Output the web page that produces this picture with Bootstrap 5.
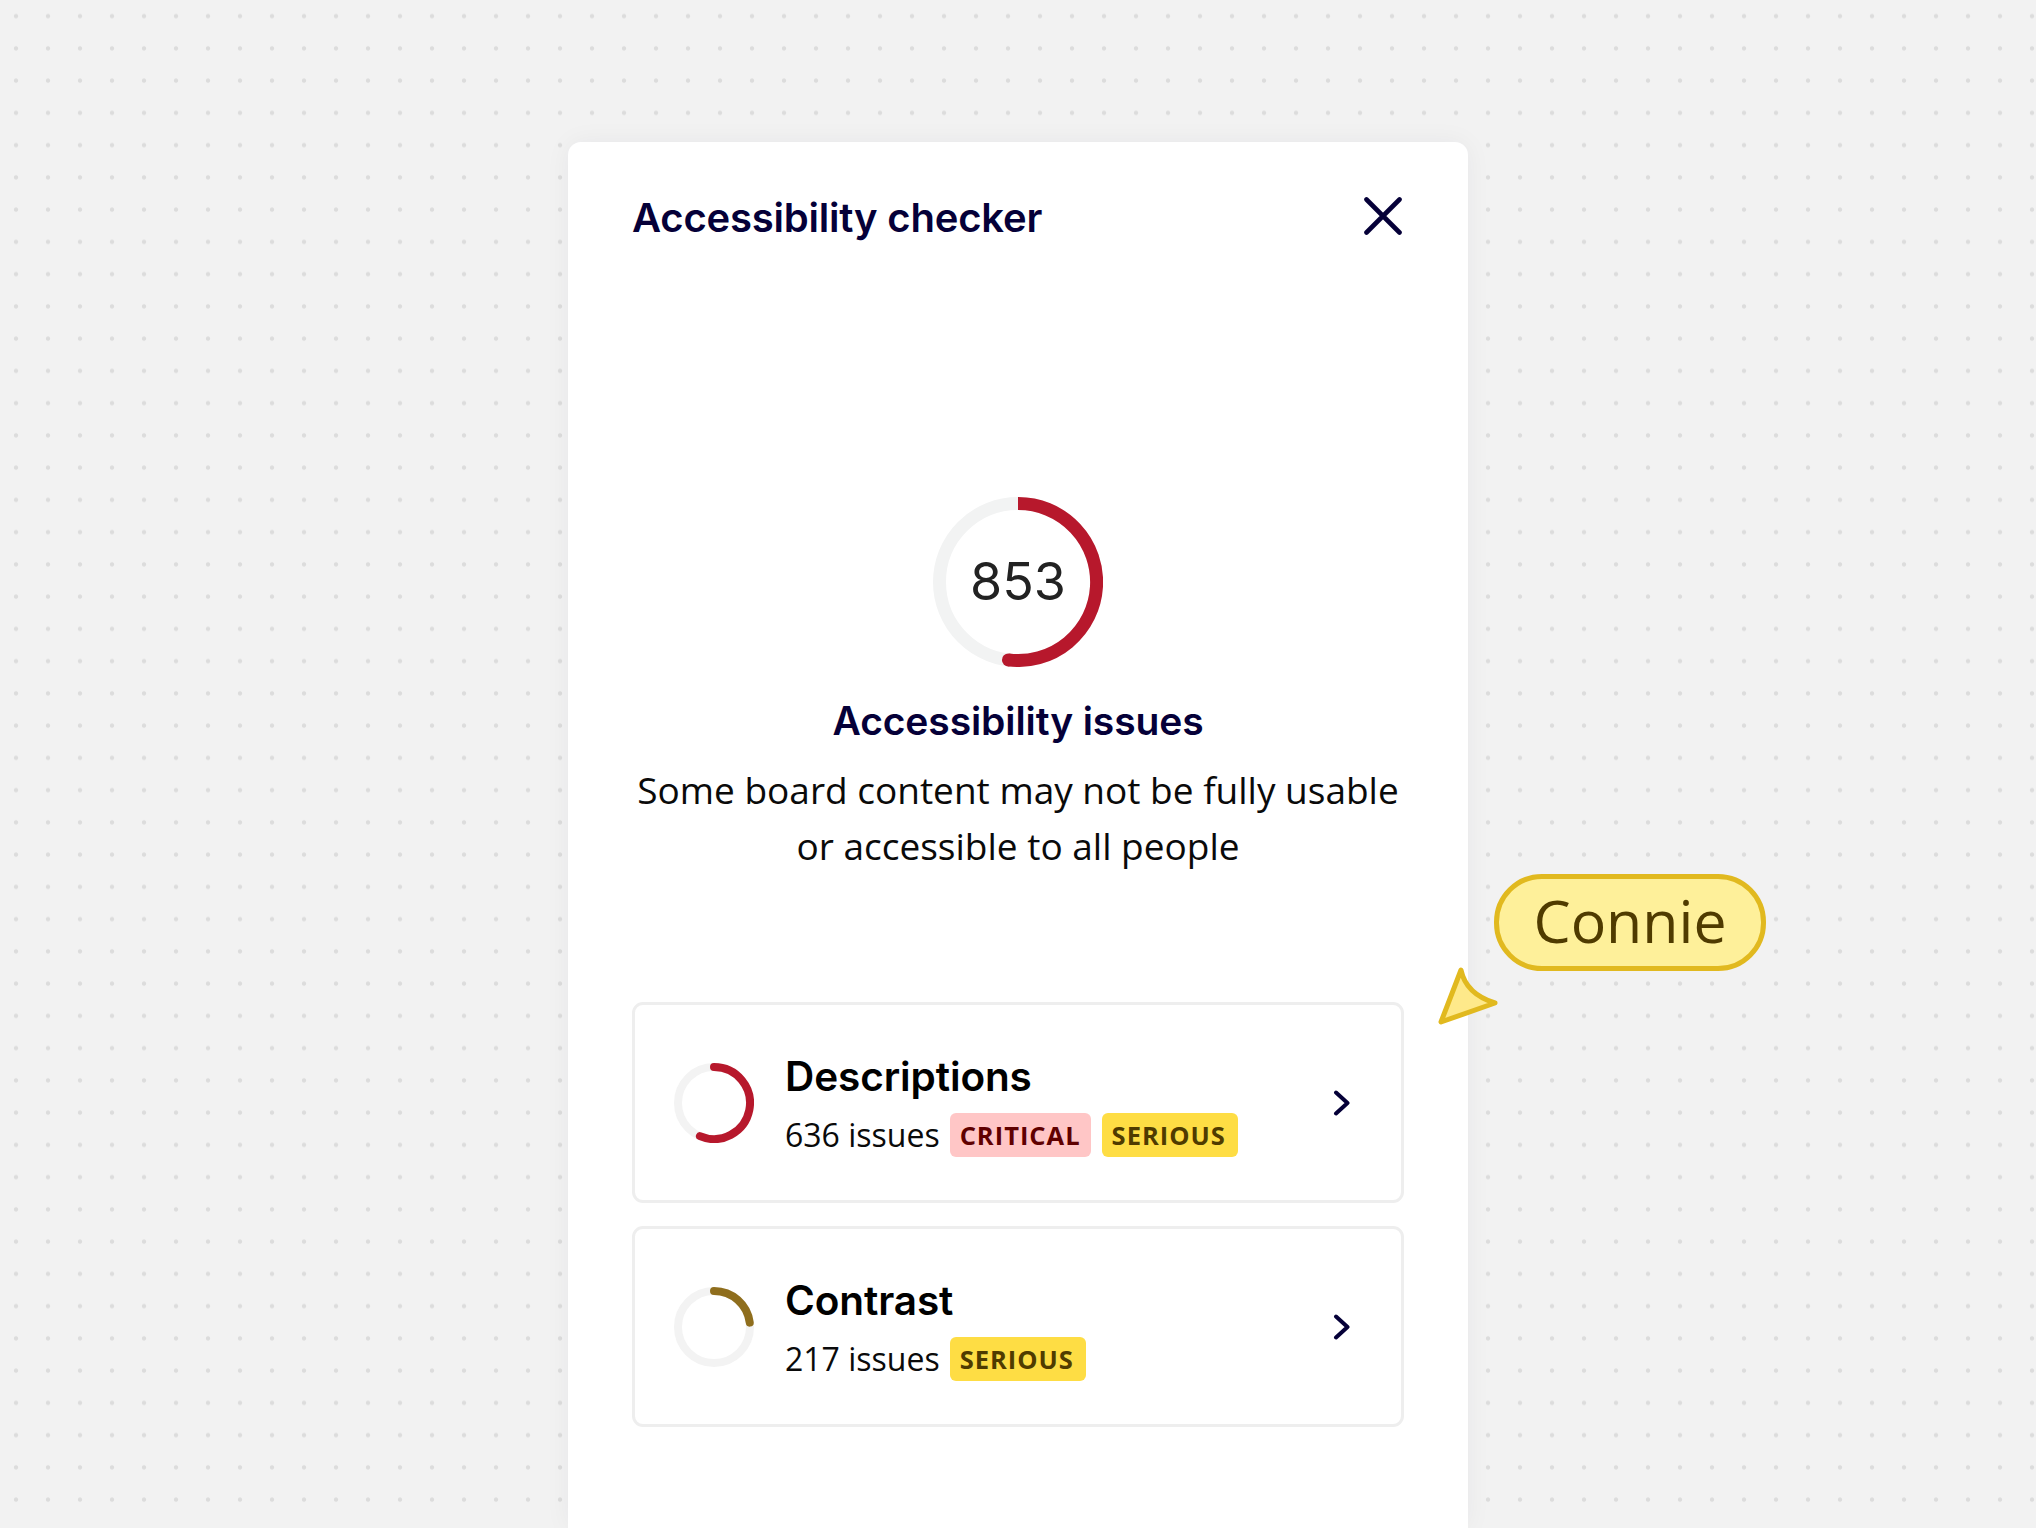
<!DOCTYPE html>
<html lang="en">
<head>
<meta charset="utf-8">
<title>Accessibility checker</title>
<link rel="stylesheet" href="https://cdn.jsdelivr.net/npm/bootstrap@5.3.0/dist/css/bootstrap.min.css">
<style>
html,body{height:100%;}
body{margin:0;width:2036px;height:1528px;overflow:hidden;position:relative;background-color:#f2f2f2;
  background-image:radial-gradient(circle at center,#dcdcdc 0,#dcdcdc 1.7px,transparent 2.6px);
  background-size:32px 32.25px;background-position:0 0;font-family:"Open Sans","Liberation Sans",sans-serif;}
.panel{width:900px;height:1386px;margin-left:568px;position:relative;top:142px;background:#fff;border-radius:13px 13px 0 0;
  box-shadow:0 0 26px rgba(5,0,56,.05);padding:52px 64px 0 64px;}
.head-title{font-family:Inter,sans-serif;font-weight:600;font-size:40px;line-height:48px;color:#050038;letter-spacing:-.2px;margin:0;}
.close-x{width:38px;height:38px;margin:3px 2px 0 0;border:0;background:none;display:block;}
.hero{margin-top:255px;}
.ring-stack{display:grid;width:170px;height:170px;margin:0 auto;}
.ring-stack>*{grid-area:1/1;}
.ring-num{font-family:Inter,sans-serif;font-size:52px;color:#222;align-self:center;justify-self:center;line-height:1;}
.hero-title{font-family:Inter,sans-serif;font-weight:600;font-size:39px;line-height:48px;color:#050038;letter-spacing:-.1px;margin:30px 0 0;}
.hero-copy{font-size:37px;line-height:56px;color:#0a0a0a;margin:17px 0 0;}
.issues{margin-top:128px;gap:23px;}
.issue{border:3px solid #eeeeee;border-radius:11px;height:201px;flex-direction:row;align-items:center;padding:0 50px 0 39px;}
.issue-ring{width:80px;height:80px;flex:none;margin-right:31px;}
.issue-text{padding-top:5px;}
.issue-name{font-family:Inter,sans-serif;font-weight:600;font-size:40.5px;line-height:48px;color:#000;letter-spacing:-.1px;}
.issue-meta{margin-top:12px;}
.issue-count{font-size:32px;color:#0a0a0a;line-height:44px;margin-right:2px;}
.tag{font-size:25.5px;font-weight:700;letter-spacing:1px;line-height:44px;height:44px;padding:0 10px;border-radius:6px;}
.tag-critical{background:#ffc6c6;color:#600000;margin-right:3px;}
.tag-serious{background:#fedd44;color:#4f3b00;padding-right:12px;}
.pointer{position:absolute;left:1437px;top:964px;width:64px;height:64px;}
.who{position:absolute;left:1494px;top:874px;width:272px;height:97px;border:5px solid #e1b91f;border-radius:48px;background:#fef09a;color:#4f3b00;font-size:59px;line-height:83px;text-align:center;}
</style>
</head>
<body>
<div class="panel">
  <div class="d-flex justify-content-between align-items-start">
    <h1 class="head-title">Accessibility checker</h1>
    <button class="close-x p-0" type="button" aria-label="Close">
      <svg width="38" height="38" viewBox="0 0 38 38" fill="none" stroke="#050038" stroke-width="4.6" stroke-linecap="round"><path d="M2.5 2.5 35.5 35.5M35.5 2.5 2.5 35.5"/></svg>
    </button>
  </div>
  <div class="hero text-center">
    <div class="ring-stack">
      <svg width="170" height="170" viewBox="0 0 170 170" fill="none">
        <circle cx="85" cy="85" r="78.5" stroke="#f2f3f3" stroke-width="13"/>
        <path d="M85 6.5A78.5 78.5 0 1 1 75.43 162.9" stroke="#b7182c" stroke-width="13"/>
        <circle cx="75.43" cy="162.9" r="6.5" fill="#b7182c"/>
      </svg>
      <span class="ring-num">853</span>
    </div>
    <h2 class="hero-title">Accessibility issues</h2>
    <p class="hero-copy">Some board content may not be fully usable<br>or accessible to all people</p>
  </div>
  <div class="issues d-flex flex-column">
    <div class="card issue">
      <svg class="issue-ring" viewBox="0 0 80 80" fill="none" stroke-width="8">
        <circle cx="40" cy="40" r="36" stroke="#f3f3f3"/>
        <path d="M40 4A36 36 0 1 1 25.93 73.14" stroke="#b7182c" stroke-linecap="round"/>
      </svg>
      <div class="issue-text flex-grow-1">
        <div class="issue-name">Descriptions</div>
        <div class="issue-meta d-flex align-items-center gap-2">
          <span class="issue-count">636 issues</span>
          <span class="tag tag-critical">CRITICAL</span>
          <span class="tag tag-serious">SERIOUS</span>
        </div>
      </div>
      <svg width="18" height="26" viewBox="0 0 18 26" fill="none" stroke="#050038" stroke-width="4" stroke-linecap="round" stroke-linejoin="round"><path d="M3 2.5 14.5 13 3 23.5"/></svg>
    </div>
    <div class="card issue">
      <svg class="issue-ring" viewBox="0 0 80 80" fill="none" stroke-width="8">
        <circle cx="40" cy="40" r="36" stroke="#f3f3f3"/>
        <path d="M40 4A36 36 0 0 1 75.73 35.61" stroke="#8f6e1d" stroke-linecap="round"/>
      </svg>
      <div class="issue-text flex-grow-1">
        <div class="issue-name">Contrast</div>
        <div class="issue-meta d-flex align-items-center gap-2">
          <span class="issue-count">217 issues</span>
          <span class="tag tag-serious">SERIOUS</span>
        </div>
      </div>
      <svg width="18" height="26" viewBox="0 0 18 26" fill="none" stroke="#050038" stroke-width="4" stroke-linecap="round" stroke-linejoin="round"><path d="M3 2.5 14.5 13 3 23.5"/></svg>
    </div>
  </div>
</div>
<svg class="pointer" viewBox="0 0 64 64" fill="#fee98a" stroke="#e1b91f" stroke-width="5" stroke-linejoin="round"><path d="M24 6Q29 30 58 39L4 58Z"/></svg>
<div class="who">Connie</div>
<script src="https://cdn.jsdelivr.net/npm/bootstrap@5.3.0/dist/js/bootstrap.bundle.min.js"></script>
</body>
</html>
